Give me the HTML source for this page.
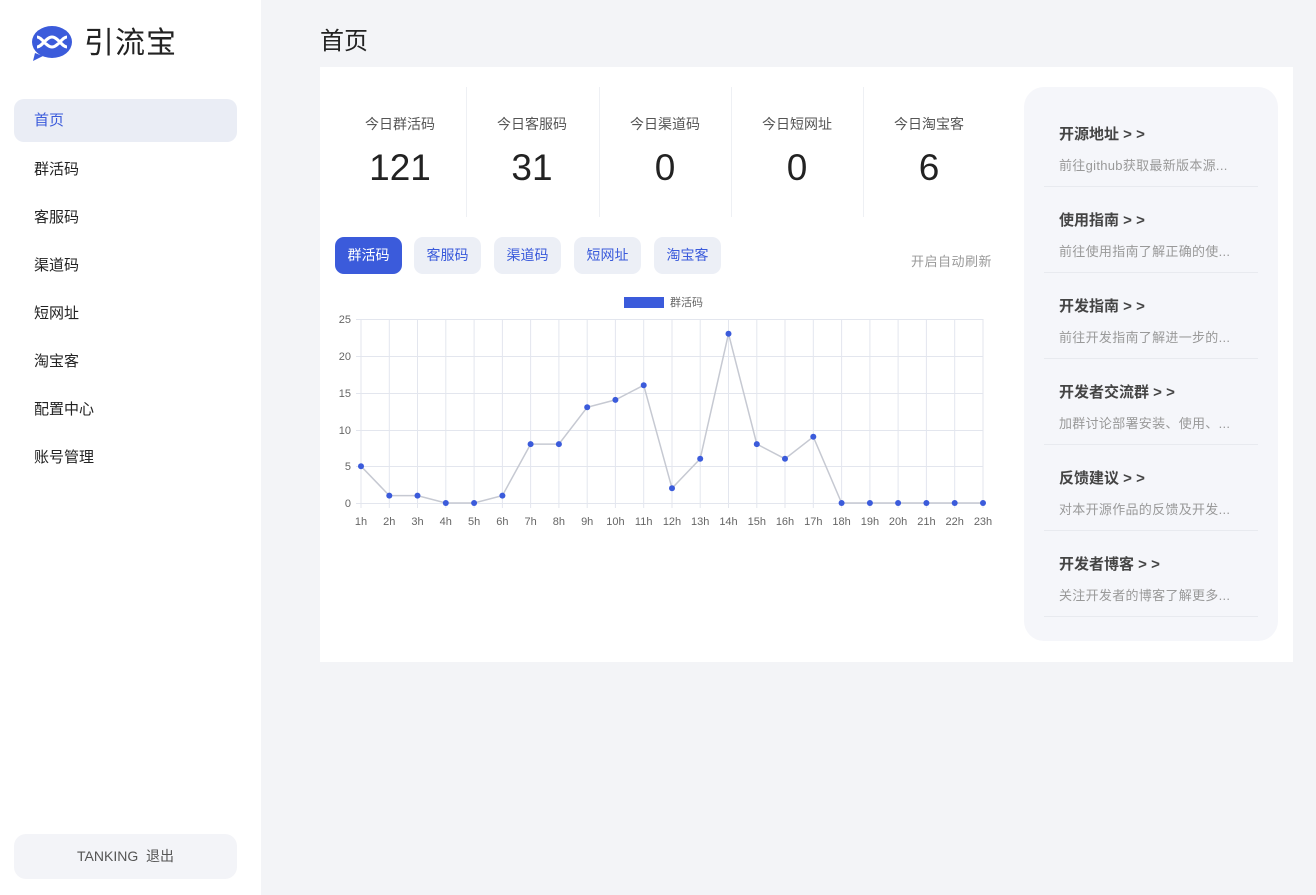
<!DOCTYPE html>
<html><head><meta charset="utf-8"><style>
*{margin:0;padding:0;box-sizing:border-box}
body{width:1316px;height:895px;background:#f3f4f7;font-family:"Liberation Sans","Noto Sans CJK SC",sans-serif;position:relative;overflow:hidden;color:#222}
.side{position:absolute;left:0;top:0;width:261px;height:895px;background:#fff}
.logo{position:absolute;left:30px;top:24px;display:flex;align-items:center}
.logo span{font-size:30px;color:#222;margin-left:10px;letter-spacing:1px;line-height:40px}
.nav{position:absolute;left:14px;width:223px;height:43px;line-height:43px;padding-left:20px;font-size:15px;color:#222;border-radius:10px}
.nav.on{background:#eaedf5;color:#3b5bdb}
.logout{position:absolute;left:14px;top:834px;width:223px;height:45px;line-height:45px;text-align:center;background:#f3f4f8;border-radius:12px;font-size:14px;color:#555}
h1{position:absolute;left:320px;top:21px;font-size:24px;font-weight:normal;color:#222}
.card{position:absolute;left:320px;top:67px;width:973px;height:595px;background:#fff}
.stat{position:absolute;top:87px;width:132px;height:130px;text-align:center}
.stat .t{margin-top:27px;font-size:14px;color:#555}
.stat .v{margin-top:13px;font-size:37px;color:#222}
.div{position:absolute;top:87px;width:1px;height:130px;background:#eef0f4}
.tab{position:absolute;top:237px;height:37px;line-height:37px;width:67px;text-align:center;font-size:14px;color:#3b5bdb;background:#eceff6;border-radius:9px}
.tab.on{background:#3b5bdb;color:#fff}
.ref{position:absolute;left:911px;top:251px;font-size:13px;color:#999;letter-spacing:0.5px}
.panel{position:absolute;left:1024px;top:87px;width:254px;height:554px;background:#f5f6fa;border-radius:20px}
.item{position:absolute;left:20px;width:214px;height:86px;border-bottom:1px solid #e8eaef}
.item b{position:absolute;left:15px;top:22px;font-size:15px;color:#444}
.item p{position:absolute;left:15px;top:54px;font-size:13px;color:#999;white-space:nowrap;letter-spacing:0.3px}
</style></head><body>
<div class="side">
<div class="logo"><svg width="44" height="38" viewBox="0 0 44 38"><ellipse cx="22" cy="17" rx="20" ry="16" fill="#3b5bdb"/><path d="M5 28 L3 36 L13 31 Z" fill="#3b5bdb"/><path d="M7 12 C12 12 16 22 22 22 C28 22 32 12 37 12 M7 22 C12 22 16 12 22 12 C28 12 32 22 37 22" stroke="#fff" stroke-width="3" fill="none"/></svg><span>引流宝</span></div>
<div class="nav on" style="top:99px">首页</div>
<div class="nav" style="top:148px">群活码</div>
<div class="nav" style="top:196px">客服码</div>
<div class="nav" style="top:244px">渠道码</div>
<div class="nav" style="top:292px">短网址</div>
<div class="nav" style="top:340px">淘宝客</div>
<div class="nav" style="top:388px">配置中心</div>
<div class="nav" style="top:436px">账号管理</div>
<div class="logout">TANKING&nbsp;&nbsp;退出</div>
</div>
<h1>首页</h1>
<div class="card"></div>
<div class="stat" style="left:334px"><div class="t">今日群活码</div><div class="v">121</div></div>
<div class="div" style="left:466px"></div>
<div class="stat" style="left:466px"><div class="t">今日客服码</div><div class="v">31</div></div>
<div class="div" style="left:599px"></div>
<div class="stat" style="left:599px"><div class="t">今日渠道码</div><div class="v">0</div></div>
<div class="div" style="left:731px"></div>
<div class="stat" style="left:731px"><div class="t">今日短网址</div><div class="v">0</div></div>
<div class="div" style="left:863px"></div>
<div class="stat" style="left:863px"><div class="t">今日淘宝客</div><div class="v">6</div></div>
<div class="tab on" style="left:335px">群活码</div>
<div class="tab" style="left:414px">客服码</div>
<div class="tab" style="left:494px">渠道码</div>
<div class="tab" style="left:574px">短网址</div>
<div class="tab" style="left:654px">淘宝客</div>
<div class="ref">开启自动刷新</div>
<svg style="position:absolute;left:0;top:0" width="1316" height="895">
<rect x="624" y="297" width="40" height="11" fill="#3b5bdb"/>
<text x="670" y="306" font-size="11" fill="#666" font-family="Liberation Sans,Noto Sans CJK SC,sans-serif">群活码</text>
<g stroke="#e3e6ee" stroke-width="1">
<line x1="356" y1="319.5" x2="983" y2="319.5"/><line x1="356" y1="356.5" x2="983" y2="356.5"/><line x1="356" y1="393.5" x2="983" y2="393.5"/><line x1="356" y1="430.5" x2="983" y2="430.5"/><line x1="356" y1="466.5" x2="983" y2="466.5"/><line x1="356" y1="503.5" x2="983" y2="503.5"/>
<line x1="361" y1="319" x2="361" y2="508"/><line x1="389.3" y1="319" x2="389.3" y2="508"/><line x1="417.5" y1="319" x2="417.5" y2="508"/><line x1="445.8" y1="319" x2="445.8" y2="508"/><line x1="474.1" y1="319" x2="474.1" y2="508"/><line x1="502.4" y1="319" x2="502.4" y2="508"/><line x1="530.6" y1="319" x2="530.6" y2="508"/><line x1="558.9" y1="319" x2="558.9" y2="508"/><line x1="587.2" y1="319" x2="587.2" y2="508"/><line x1="615.4" y1="319" x2="615.4" y2="508"/><line x1="643.7" y1="319" x2="643.7" y2="508"/><line x1="672" y1="319" x2="672" y2="508"/><line x1="700.2" y1="319" x2="700.2" y2="508"/><line x1="728.5" y1="319" x2="728.5" y2="508"/><line x1="756.8" y1="319" x2="756.8" y2="508"/><line x1="785" y1="319" x2="785" y2="508"/><line x1="813.3" y1="319" x2="813.3" y2="508"/><line x1="841.6" y1="319" x2="841.6" y2="508"/><line x1="869.9" y1="319" x2="869.9" y2="508"/><line x1="898.1" y1="319" x2="898.1" y2="508"/><line x1="926.4" y1="319" x2="926.4" y2="508"/><line x1="954.7" y1="319" x2="954.7" y2="508"/><line x1="983" y1="319" x2="983" y2="508"/>
</g>
<g font-size="11" fill="#666" font-family="Liberation Sans,sans-serif" text-anchor="end">
<text x="351" y="323">25</text><text x="351" y="360">20</text><text x="351" y="397">15</text><text x="351" y="434">10</text><text x="351" y="470">5</text><text x="351" y="507">0</text>
</g>
<g font-size="11" fill="#666" font-family="Liberation Sans,sans-serif" text-anchor="middle">
<text x="361" y="525">1h</text><text x="389.3" y="525">2h</text><text x="417.5" y="525">3h</text><text x="445.8" y="525">4h</text><text x="474.1" y="525">5h</text><text x="502.4" y="525">6h</text><text x="530.6" y="525">7h</text><text x="558.9" y="525">8h</text><text x="587.2" y="525">9h</text><text x="615.4" y="525">10h</text><text x="643.7" y="525">11h</text><text x="672" y="525">12h</text><text x="700.2" y="525">13h</text><text x="728.5" y="525">14h</text><text x="756.8" y="525">15h</text><text x="785" y="525">16h</text><text x="813.3" y="525">17h</text><text x="841.6" y="525">18h</text><text x="869.9" y="525">19h</text><text x="898.1" y="525">20h</text><text x="926.4" y="525">21h</text><text x="954.7" y="525">22h</text><text x="983" y="525">23h</text>
</g>
<polyline fill="none" stroke="#c6c9d2" stroke-width="1.5" points="361,466.2 389.3,495.6 417.5,495.6 445.8,503 474.1,503 502.4,495.6 530.6,444.1 558.9,444.1 587.2,407.3 615.4,399.9 643.7,385.2 672,488.3 700.2,458.8 728.5,333.7 756.8,444.1 785,458.8 813.3,436.8 841.6,503 869.9,503 898.1,503 926.4,503 954.7,503 983,503"/>
<g fill="#3b5bdb">
<circle cx="361" cy="466.2" r="3"/><circle cx="389.3" cy="495.6" r="3"/><circle cx="417.5" cy="495.6" r="3"/><circle cx="445.8" cy="503" r="3"/><circle cx="474.1" cy="503" r="3"/><circle cx="502.4" cy="495.6" r="3"/><circle cx="530.6" cy="444.1" r="3"/><circle cx="558.9" cy="444.1" r="3"/><circle cx="587.2" cy="407.3" r="3"/><circle cx="615.4" cy="399.9" r="3"/><circle cx="643.7" cy="385.2" r="3"/><circle cx="672" cy="488.3" r="3"/><circle cx="700.2" cy="458.8" r="3"/><circle cx="728.5" cy="333.7" r="3"/><circle cx="756.8" cy="444.1" r="3"/><circle cx="785" cy="458.8" r="3"/><circle cx="813.3" cy="436.8" r="3"/><circle cx="841.6" cy="503" r="3"/><circle cx="869.9" cy="503" r="3"/><circle cx="898.1" cy="503" r="3"/><circle cx="926.4" cy="503" r="3"/><circle cx="954.7" cy="503" r="3"/><circle cx="983" cy="503" r="3"/>
</g>
</svg>
<div class="panel">
<div class="item" style="top:14px"><b>开源地址 &gt; &gt;</b><p>前往github获取最新版本源...</p></div>
<div class="item" style="top:100px"><b>使用指南 &gt; &gt;</b><p>前往使用指南了解正确的使...</p></div>
<div class="item" style="top:186px"><b>开发指南 &gt; &gt;</b><p>前往开发指南了解进一步的...</p></div>
<div class="item" style="top:272px"><b>开发者交流群 &gt; &gt;</b><p>加群讨论部署安装、使用、...</p></div>
<div class="item" style="top:358px"><b>反馈建议 &gt; &gt;</b><p>对本开源作品的反馈及开发...</p></div>
<div class="item" style="top:444px"><b>开发者博客 &gt; &gt;</b><p>关注开发者的博客了解更多...</p></div>
</div>
</body></html>
